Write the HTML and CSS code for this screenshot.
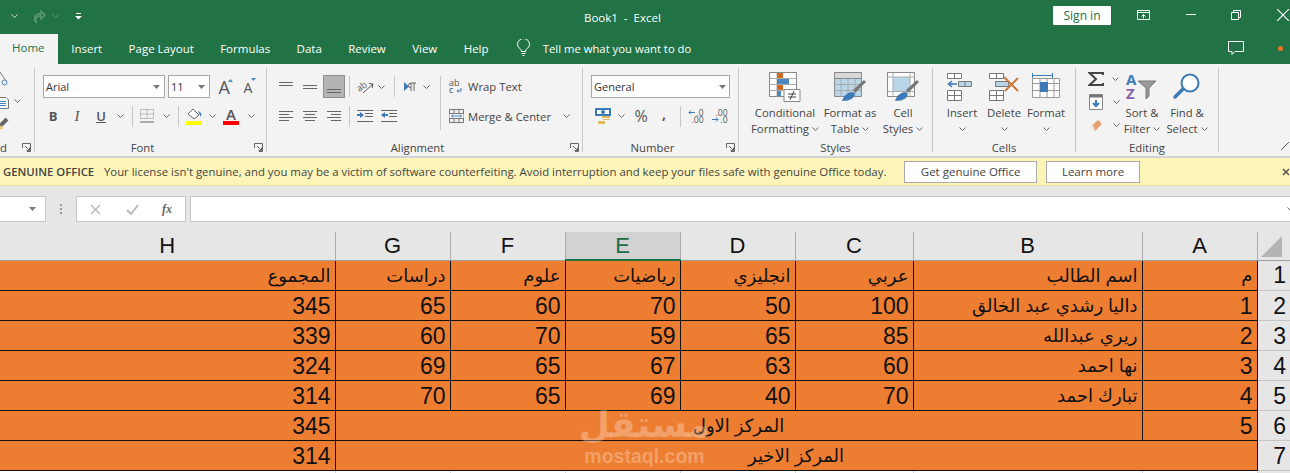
FILE: index.html
```html
<!DOCTYPE html>
<html lang="en">
<head>
<meta charset="utf-8">
<title>Book1 - Excel</title>
<link rel="stylesheet" href="styles.css">
</head>
<body>
<svg class="defs" width="0" height="0" aria-hidden="true">
  <symbol id="chev" viewBox="0 0 7 4"><path d="M.5.5 3.5 3.5 6.5.5" fill="none" stroke="#666" stroke-width="1"/></symbol>
  <symbol id="drop" viewBox="0 0 7 4"><path d="M0 0h7L3.500 4z" fill="#777"/></symbol>
  <symbol id="launch" viewBox="0 0 9 9"><path d="M.5 5V.5H8.500V8.500H5M3 3 7.500 7.500M4.500 7.500H7.500V4.500" fill="none" stroke="#666"/></symbol>
  <symbol id="lines-top" viewBox="0 0 14 10"><path d="M0 .5h14M0 3.500h14" stroke="#666"/></symbol>
  <symbol id="lines-mid" viewBox="0 0 14 10"><path d="M0 3.500h14M0 6.500h14" stroke="#666"/></symbol>
  <symbol id="lines-left" viewBox="0 0 14 11"><path d="M0 .5h14M0 3.500h10M0 6.500h14M0 9.500h10" stroke="#666"/></symbol>
  <symbol id="lines-center" viewBox="0 0 14 11"><path d="M0 .5h14M2 3.500h10M0 6.500h14M2 9.500h10" stroke="#666"/></symbol>
  <symbol id="lines-right" viewBox="0 0 14 11"><path d="M0 .5h14M4 3.500h10M0 6.500h14M4 9.500h10" stroke="#666"/></symbol>
</svg>
<div class="app">
  <header class="titlebar">
    <div class="qat">
      <svg class="qat-undo" viewBox="0 0 16 14"><path d="M-5 7a5 5 0 1 0 10 0 5 5 0 1 0-10 0" fill="none" stroke="#fff" stroke-width="2"/></svg>
      <svg class="ic7x4 qat-c1" viewBox="0 0 7 4"><path d="M.5.5 3.500 3.500 6.500.5" fill="none" stroke="#d6e5dc"/></svg>
      <svg class="qat-redo" viewBox="0 0 16 14"><path d="M14 6 10 2v3H7a5 5 0 0 0-1 9 4 4 0 0 1 2-7h2v3z" fill="none" stroke="#5d9c7b" stroke-width="1.300"/></svg>
      <svg class="ic7x4 qat-c2" viewBox="0 0 7 4"><path d="M.5.5 3.500 3.500 6.500.5" fill="none" stroke="#5d9c7b"/></svg>
      <svg class="qat-more" viewBox="0 0 7 7"><path d="M1 .5h5" stroke="#fff"/><path d="M0 3h7L3.500 6.500z" fill="#fff"/></svg>
    </div>
    <div class="doc-title">Book1 &nbsp;-&nbsp; Excel</div>
    <div class="win">
      <button class="signin">Sign in</button>
      <svg class="win-ribbon" viewBox="0 0 13 10"><path d="M.5.5h12v9H.5zM.5 2.500h12M6.500 8.500V4.500M4.500 6.500l2-2 2 2" fill="none" stroke="#fff"/></svg>
      <svg class="win-min" viewBox="0 0 10 1"><path d="M0 .5h10" stroke="#fff"/></svg>
      <svg class="win-max" viewBox="0 0 10 10"><path d="M.5 2.500h7v7h-7zM2.500 2.500v-2h7v7h-2" fill="none" stroke="#fff"/></svg>
      <svg class="win-close" viewBox="0 0 10 10"><path d="M0 0 10 10M10 0 0 10" stroke="#fff"/></svg>
    </div>
  </header>

  <nav class="tabs">
    <span class="tab tab-home">Home</span>
    <span class="tab">Insert</span>
    <span class="tab">Page Layout</span>
    <span class="tab">Formulas</span>
    <span class="tab">Data</span>
    <span class="tab">Review</span>
    <span class="tab">View</span>
    <span class="tab">Help</span>
    <svg class="bulb" viewBox="0 0 13 17"><path d="M4.500 12.500C4.500 9.500.5 9 .5 5.500a6 6 0 0 1 12 0c0 3.500-4 4-4 7zM4.500 14.500h4M5.500 16.500h2" fill="none" stroke="#fff"/></svg>
    <span class="tell">Tell me what you want to do</span>
    <svg class="comment" viewBox="0 0 16 14"><path d="M.5.5h15v10H7l-3 3v-3H.5z" fill="none" stroke="#fff"/></svg>
    <span class="dot"></span>
  </nav>

  <section class="ribbon">
    <div class="group g-clip">
      <div class="clip-icons">
        <svg class="clip-cut" viewBox="0 0 9 14"><path d="M0 0 6 9" stroke="#777" fill="none"/><circle cx="4.500" cy="10.500" r="2.500" fill="none" stroke="#4a86c0"/></svg>
        <svg class="clip-copy" viewBox="0 0 9 12"><path d="M-3 .5H6L8.500 3V11.500H-3z" fill="#fff" stroke="#777"/><path d="M-2 4.500H6M-2 6.500H6M-2 8.500H6" stroke="#4a86c0"/></svg>
        <svg class="clip-paint" viewBox="0 0 9 13"><path d="M0 9 7 2" stroke="#666" stroke-width="4"/><path d="M0 9 2 12" stroke="#e6c86a" stroke-width="3"/></svg>
      </div>
      <div class="chev-col">
        <svg class="chev clip-chev"><use href="#chev"/></svg>
      </div>
      <div class="g-label g-label-clip"><span>d</span><svg class="launch"><use href="#launch"/></svg></div>
    </div>

    <div class="group g-font">
      <div class="row font-r1">
        <div class="select sel-font"><span>Arial</span><svg class="drop"><use href="#drop"/></svg></div>
        <div class="select sel-size"><span>11</span><svg class="drop"><use href="#drop"/></svg></div>
        <div class="grow-a">A<svg class="tri" viewBox="0 0 5 3"><path d="M0 3 2.500 0 5 3z" fill="#4a86c0"/></svg></div>
        <div class="shrink-a">A<svg class="tri" viewBox="0 0 5 3"><path d="M0 0 2.500 3 5 0z" fill="#4a86c0"/></svg></div>
      </div>
      <div class="row font-r2">
        <b class="fmt">B</b>
        <i class="fmt fmt-i">I</i>
        <u class="fmt fmt-u">U</u>
        <svg class="chev"><use href="#chev"/></svg>
        <span class="vsep"></span>
        <svg class="ic-border" viewBox="0 0 14 14"><path d="M.5.500h13v9H.5zM7 .5v9M.5 5h13" fill="none" stroke="#888" stroke-dasharray="1 1"/><path d="M0 13h14" stroke="#666" stroke-width="1"/></svg>
        <svg class="chev"><use href="#chev"/></svg>
        <span class="vsep"></span>
        <svg class="ic-fill" viewBox="0 0 16 17"><path d="M7 1 13 7 8 11 2 6z" fill="#fff" stroke="#666"/><path d="M12 3c3 1 4 3 3 6z" fill="#3d7ab8"/><path d="M0 13h16v4H0z" fill="#ff0"/></svg>
        <svg class="chev"><use href="#chev"/></svg>
        <div class="fontcolor"><span>A</span><i class="fc-bar"></i></div>
        <svg class="chev"><use href="#chev"/></svg>
      </div>
      <div class="g-label lb-font"><span>Font</span><svg class="launch"><use href="#launch"/></svg></div>
    </div>

    <div class="group g-align">
      <div class="row align-r1">
        <svg class="ln"><use href="#lines-top"/></svg>
        <svg class="ln"><use href="#lines-mid"/></svg>
        <div class="bottom-on"><svg class="ln-on" viewBox="0 0 14 6"><path d="M0 .5h14M0 3.500h14" stroke="#666"/></svg></div>
        <span class="vsep"></span>
        <svg class="ic-orient" viewBox="0 0 17 15"><text x="0" y="10" transform="rotate(-35 6 8)" class="orient-t">ab</text><path d="M6 14 16 5M12 4.500l4 .5-1 4" fill="none" stroke="#555"/></svg>
        <svg class="chev"><use href="#chev"/></svg>
        <span class="vsep"></span>
        <svg class="ic-rtl" viewBox="0 0 13 10"><path d="M0 0 5 4.500 0 9z" fill="#3d7ab8"/><path d="M7 9V1h5M10 1v8M7 1a2.500 2.500 0 0 0 0 5" fill="none" stroke="#666"/></svg>
        <svg class="chev"><use href="#chev"/></svg>
        <span class="vsep vsep-tall"></span>
        <svg class="ic-wrap" viewBox="0 0 14 15"><text x="0" y="7" class="wrap-t">ab</text><text x="0" y="14" class="wrap-t">c</text><path d="M12 9v3H8M9.500 10.500 8 12l1.500 1.500" fill="none" stroke="#3d7ab8"/></svg>
        <span class="rb-text">Wrap Text</span>
      </div>
      <div class="row align-r2">
        <svg class="ln2"><use href="#lines-left"/></svg>
        <svg class="ln2"><use href="#lines-center"/></svg>
        <svg class="ln2"><use href="#lines-right"/></svg>
        <span class="vsep"></span>
        <svg class="ic-indent" viewBox="0 0 16 12"><path d="M0 .5h16M8 3.500h8M8 6.500h8M0 11.500h16" stroke="#666"/><path d="M0 5h4" stroke="#3d7ab8" stroke-width="2"/><path d="M3 2 7 5 3 8z" fill="#3d7ab8"/></svg>
        <svg class="ic-indent" viewBox="0 0 16 12"><path d="M0 .5h16M8 3.500h8M8 6.500h8M0 11.500h16" stroke="#666"/><path d="M3 5h4" stroke="#3d7ab8" stroke-width="2"/><path d="M4 2 0 5 4 8z" fill="#3d7ab8"/></svg>
        <span></span>
        <svg class="ic-merge" viewBox="0 0 15 14"><path d="M.5.5h14v13H.5zM.5 4.500h14M.5 9.500h14M5 .5v4M10 .5v4M5 9.500v4M10 9.500v4" fill="#f3f3f3" stroke="#777"/><path d="M.5 5h14v4H.5z" fill="#fff"/><path d="M2.500 7h10M4 5.500 2.500 7 4 8.500M11 5.500 12.500 7 11 8.500" fill="none" stroke="#3d7ab8"/></svg>
        <span class="rb-text">Merge &amp; Center</span>
        <svg class="chev"><use href="#chev"/></svg>
      </div>
      <div class="g-label lb-align"><span>Alignment</span><svg class="launch"><use href="#launch"/></svg></div>
    </div>

    <div class="group g-num">
      <div class="row num-r1">
        <div class="select sel-num"><span>General</span><svg class="drop"><use href="#drop"/></svg></div>
      </div>
      <div class="row num-r2">
        <svg class="ic-acct" viewBox="0 0 16 16"><path d="M0 0h16v8H0z" fill="#3d7ab8"/><path d="M2 2h12v4H2z" fill="#fff"/><circle cx="8" cy="4" r="2" fill="#3d7ab8"/><path d="M7 8h8v2H7zM8 11h7v1H8zM3 13h7v3H3z" fill="#e3bb5f"/></svg>
        <svg class="chev"><use href="#chev"/></svg>
        <span class="pct">%</span>
        <span class="comma">,</span>
        <span class="vsep"></span>
        <div class="dec"><span>.0</span><span>.00</span><svg class="dec-arr" viewBox="0 0 7 5"><path d="M7 2.500H1M3 .5 1 2.500 3 4.500" fill="none" stroke="#3d7ab8"/></svg></div>
        <div class="dec dec-b"><span>.00</span><span>.0</span><svg class="dec-arr" viewBox="0 0 7 5"><path d="M0 2.500h6M4 .5l2 2-2 2" fill="none" stroke="#3d7ab8"/></svg></div>
      </div>
      <div class="g-label lb-num"><span>Number</span><svg class="launch"><use href="#launch"/></svg></div>
    </div>

    <div class="group g-styles">
      <div class="bigrow styles-row">
        <div class="big">
          <svg class="big-ic" viewBox="0 0 32 30"><path d="M.5.5h27v24H.5z" fill="#fff" stroke="#888"/><path d="M8 .5v24M.5 6.500h27M.5 12.500h27M.5 18.500h27" stroke="#aaa"/><path d="M8 1h6v5H8zM8 13h6v5H8z" fill="#d2691e"/><path d="M8 7h12v5H8zM8 19h4v5H8z" fill="#4a86c0"/><path d="M15 17.500h16v12H15z" fill="#fff" stroke="#888"/><path d="M19 22h8M19 25h8M21 28l4-9" stroke="#444" fill="none"/></svg>
          <span class="big-l">Conditional</span>
          <span class="big-l">Formatting <svg class="chev"><use href="#chev"/></svg></span>
        </div>
        <div class="big">
          <svg class="big-ic" viewBox="0 0 32 30"><path d="M.5.5h27v24H.5z" fill="#b9d6e8" stroke="#888"/><path d="M.5 6.500h27M.5 12.500h27M.5 18.500h27M7 .5v24M14 .5v24M21 .5v24" stroke="#aaa"/><path d="M.5.5h27v6H.5z" fill="#d8d8d8" stroke="#888"/><path d="M19 18 30 8l2 2-11 11z" fill="#777"/><path d="M8 29c2-6 6-9 11-9l2 2c-1 4-4 7-13 7z" fill="#3d7ab8"/></svg>
          <span class="big-l">Format as</span>
          <span class="big-l">Table <svg class="chev"><use href="#chev"/></svg></span>
        </div>
        <div class="big">
          <svg class="big-ic" viewBox="0 0 32 30"><path d="M.5.5h27v24H.5z" fill="#fff" stroke="#888"/><path d="M6 5h17v14H6z" fill="#b9d6e8"/><path d="M.5 5h27M.5 19.500h27M6 .5v24M23 .5v24" stroke="#aaa"/><path d="M19 18 30 8l2 2-11 11z" fill="#777"/><path d="M8 29c2-6 6-9 11-9l2 2c-1 4-4 7-13 7z" fill="#3d7ab8"/></svg>
          <span class="big-l">Cell</span>
          <span class="big-l">Styles <svg class="chev"><use href="#chev"/></svg></span>
        </div>
      </div>
      <div class="g-label g-center"><span>Styles</span></div>
    </div>

    <div class="group g-cells">
      <div class="bigrow cells-row">
        <div class="big">
          <svg class="big-ic" viewBox="0 0 32 30"><path d="M1.500 1.500h14v5h-14zM8.500 1.500v5M1.500 18.500h14v10h-14zM1.500 23.500h14M8.500 18.500v10" fill="#fff" stroke="#777"/><path d="M12.500 9.500h13v5h-13zM19 9.500v5" fill="#b9d6e8" stroke="#777"/><path d="M11 12H3M6 9 2.500 12 6 15" fill="none" stroke="#3d7ab8" stroke-width="1.500"/></svg>
          <span class="big-l">Insert</span>
          <svg class="chev big-chev"><use href="#chev"/></svg>
        </div>
        <div class="big">
          <svg class="big-ic" viewBox="0 0 32 30"><path d="M1.500 1.500h14v5h-14zM8.500 1.500v5M1.500 18.500h14v10h-14zM1.500 23.500h14M8.500 18.500v10" fill="#fff" stroke="#777"/><path d="M7.500 9.500h13v5h-13z" fill="#b9d6e8" stroke="#777"/><path d="M16 5 30 19M30 6 17 19" stroke="#cc7a3b" stroke-width="2" fill="none"/></svg>
          <span class="big-l">Delete</span>
          <svg class="chev big-chev"><use href="#chev"/></svg>
        </div>
        <div class="big">
          <svg class="big-ic" viewBox="0 0 32 30"><path d="M2.500 1v5M22.500 1v5M3 3.500h19" stroke="#3d7ab8" fill="none"/><path d="M2.500 6.500h27v19h-27zM2.500 11.500h27M2.500 18.500h27M10 6.500v19M17 6.500v19M24 6.500v19" fill="#fff" stroke="#999"/><path d="M10 10h8v10h-8z" fill="#3d7ab8"/></svg>
          <span class="big-l">Format</span>
          <svg class="chev big-chev"><use href="#chev"/></svg>
        </div>
      </div>
      <div class="g-label g-center"><span>Cells</span></div>
    </div>

    <div class="group g-edit">
      <div class="bigrow edit-row">
        <div class="edit-col">
          <div class="edit-item"><svg class="ic-sigma" viewBox="0 0 16 14"><path d="M15 3V1H1.500L8 7 1.500 13H15v-2" fill="none" stroke="#444" stroke-width="2"/></svg><svg class="chev"><use href="#chev"/></svg></div>
          <div class="edit-item"><svg class="ic-fd" viewBox="0 0 14 16"><path d="M.5 .5h13v15H.5z" fill="#fff" stroke="#888"/><path d="M.5.5h13v3H.5z" fill="#777"/><path d="M7 6v6M4 9l3 3 3-3" fill="none" stroke="#3d7ab8" stroke-width="2"/></svg><svg class="chev"><use href="#chev"/></svg></div>
          <div class="edit-item"><svg class="ic-eraser" viewBox="0 0 14 13"><path d="M1 8 9 1l4 4-7 7H4z" fill="#e6a070"/><path d="M1 8 3 12H6L4 6z" fill="#eee"/></svg><svg class="chev"><use href="#chev"/></svg></div>
        </div>
        <div class="big big-sort">
          <svg class="big-ic" viewBox="0 0 32 30"><text x="0" y="13" class="az-a">A</text><text x="0" y="27" class="az-z">Z</text><path d="M12 9h18l-7 7v8l-3 3v-11z" fill="#999" stroke="#777"/></svg>
          <span class="big-l">Sort &amp;</span>
          <span class="big-l">Filter <svg class="chev"><use href="#chev"/></svg></span>
        </div>
        <div class="big big-find">
          <svg class="big-ic" viewBox="0 0 32 30"><circle cx="19" cy="11" r="8.500" fill="#fff" stroke="#3d7ab8" stroke-width="2"/><path d="M12 17 4 25" stroke="#3d7ab8" stroke-width="3.500" stroke-linecap="round"/></svg>
          <span class="big-l">Find &amp;</span>
          <span class="big-l">Select <svg class="chev"><use href="#chev"/></svg></span>
        </div>
      </div>
      <div class="g-label g-center"><span>Editing</span></div>
    </div>

    <div class="collapse"><svg class="ic-collapse" viewBox="0 0 8 8"><path d="M0 8 8 0" stroke="#555"/></svg></div>
  </section>

  <section class="notice">
    <span class="notice-h">GENUINE OFFICE</span>
    <span class="notice-t">Your license isn't genuine, and you may be a victim of software counterfeiting. Avoid interruption and keep your files safe with genuine Office today.</span>
    <button class="notice-b nb-1">Get genuine Office</button>
    <button class="notice-b nb-2">Learn more</button>
    <svg class="notice-x" viewBox="0 0 8 8"><path d="M1 1 7 7M7 1 1 7" stroke="#555" stroke-width="1.500"/></svg>
  </section>

  <section class="fbar">
    <div class="namebox"><svg class="drop"><use href="#drop"/></svg></div>
    <span class="fdots"></span>
    <div class="fbtns">
      <svg class="fb-x" viewBox="0 0 11 11"><path d="M1 1 10 10M10 1 1 10" stroke="#bbb" stroke-width="1.500"/></svg>
      <svg class="fb-c" viewBox="0 0 13 11"><path d="M1 6 5 10 12 1" fill="none" stroke="#bbb" stroke-width="2"/></svg>
      <span class="fb-fx">fx</span>
    </div>
    <div class="finput"><svg class="chev finput-chev"><use href="#chev"/></svg></div>
  </section>

  <section class="sheet">
    <table class="grid">
      <colgroup>
        <col class="c-h"><col class="c-n"><col class="c-n"><col class="c-n"><col class="c-n"><col class="c-c"><col class="c-b"><col class="c-n"><col class="c-r">
      </colgroup>
      <thead>
        <tr>
          <th>H</th><th>G</th><th>F</th><th class="sel">E</th><th>D</th><th>C</th><th>B</th><th>A</th>
          <th class="corner"><span class="tri-all"></span></th>
        </tr>
      </thead>
      <tbody>
        <tr><td class="ar">المجموع</td><td class="ar">دراسات</td><td class="ar">علوم</td><td class="ar">رياضيات</td><td class="ar">انجليزي</td><td class="ar">عربي</td><td class="ar">اسم الطالب</td><td class="ar">م</td><th>1</th></tr>
        <tr><td>345</td><td>65</td><td>60</td><td>70</td><td>50</td><td>100</td><td class="ar">داليا رشدي عبد الخالق</td><td>1</td><th>2</th></tr>
        <tr><td>339</td><td>60</td><td>70</td><td>59</td><td>65</td><td>85</td><td class="ar">ريري عبدالله</td><td>2</td><th>3</th></tr>
        <tr><td>324</td><td>69</td><td>65</td><td>67</td><td>63</td><td>60</td><td class="ar">نها احمد</td><td>3</td><th>4</th></tr>
        <tr><td>314</td><td>70</td><td>65</td><td>69</td><td>40</td><td>70</td><td class="ar">تبارك احمد</td><td>4</td><th>5</th></tr>
        <tr><td>345</td><td colspan="6" class="ar mid">المركز الاول</td><td>5</td><th>6</th></tr>
        <tr><td>314</td><td colspan="7" class="ar mid">المركز الاخير</td><th>7</th></tr>
        <tr class="empty"><td></td><td></td><td></td><td></td><td></td><td></td><td></td><td></td><th></th></tr>
      </tbody>
    </table>
    <div class="mark"><span class="mark-ar">مستقل</span><span class="mark-en">mostaql.com</span></div>
  </section>
</div>
</body>
</html>
```

FILE: styles.css
```css
* { box-sizing: border-box; }
html, body { margin: 0; padding: 0; }
body { width: 1290px; height: 473px; overflow: hidden; font-family: "Open Sans", "Noto Sans", sans-serif; font-size: 11.3px; color: #444; }
.defs { position: absolute; }
svg { display: block; flex: none; }
.app { display: flex; flex-direction: column; width: 1290px; height: 473px; overflow: hidden; }

/* title bar */
.titlebar { display: flex; align-items: center; height: 32px; background: #217346; color: #fff; flex: none; }
.qat { display: flex; align-items: center; width: 584px; }
.qat-undo { width: 16px; height: 14px; margin-left: -9px; }
.ic7x4 { width: 7px; height: 4px; }
.qat-c1 { margin-left: 4px; }
.qat-redo { width: 16px; height: 14px; margin-left: 13px; }
.qat-c2 { margin-left: 5px; }
.qat-more { width: 7px; height: 7px; margin-left: 16px; }
.doc-title { width: 76px; white-space: nowrap; color: #fff; font-size: 11.500px; margin-top: 3px; }
.win { display: flex; align-items: center; margin-left: 393px; }
.signin { width: 58px; height: 19px; margin-top: -1px; background: #fff; color: #217346; border: 0; border-radius: 1px; padding: 0; font: 12px "Open Sans", sans-serif; }
.win-ribbon { width: 13px; height: 10px; margin-left: 26px; margin-top: -2px; }
.win-min { width: 10px; height: 1px; margin-left: 36px; margin-top: -4px; }
.win-max { width: 10px; height: 10px; margin-left: 35px; margin-top: -2px; }
.win-close { width: 12px; height: 12px; margin-left: 36px; margin-top: -2px; }

/* tabs */
.tabs { display: flex; align-items: center; height: 32px; background: #217346; flex: none; position: relative; }
.tab { color: #fff; padding: 0 13.200px; white-space: nowrap; font-size: 11.500px; }
.tab-home { background: #f3f3f3; color: #217346; align-self: flex-end; height: 30px; width: 58px; padding: 6px 0 0 12px; }
.bulb { width: 13px; height: 17px; margin-left: 15px; margin-top: -1px; }
.tell { color: #fff; margin-left: 13px; white-space: nowrap; width: 151px; }
.comment { width: 16px; height: 14px; margin-left: 534px; }
.dot { width: 5px; height: 5px; border-radius: 50%; background: #e8762c; margin-left: 34px; }

/* ribbon */
.ribbon { display: flex; height: 94px; flex: none; background: #f3f3f3; border-bottom: 2px solid #d2d2d2; padding-top: 4px; position: relative; }
.group { display: flex; flex-direction: column; height: 84px; border-right: 1px solid #c6c6c6; position: relative; flex: none; }
.g-clip { width: 35px; flex-direction: row; flex-wrap: wrap; }
.g-font { width: 232px; }
.g-align { width: 316px; }
.g-num { width: 156px; }
.g-styles { width: 194px; }
.g-cells { width: 143px; }
.g-edit { width: 143px; }
.g-label { display: flex; align-items: center; justify-content: center; position: absolute; left: 0; right: 0; bottom: -3px; height: 16px; color: #444; }
.g-label .launch { position: absolute; right: 3px; top: 4px; }
.lb-font { padding-right: 16px; }
.lb-align { padding-right: 14px; }
.lb-num { padding-right: 16px; }
.launch { width: 9px; height: 9px; }
.g-label-clip { justify-content: flex-start; }
.chev { width: 7px; height: 4px; display: inline-block; }
.drop { width: 7px; height: 4px; }
.row { display: grid; align-items: center; justify-items: center; }
.vsep { width: 1px; height: 21px; background: #c6c6c6; }
.vsep-tall { height: 54px; align-self: start; margin-top: 1px; }

/* clipboard */
.clip-icons { display: flex; flex-direction: column; width: 14px; padding-top: 4px; }
.clip-cut { width: 9px; height: 14px; }
.clip-copy { width: 9px; height: 12px; margin-top: 11px; }
.clip-paint { width: 9px; height: 13px; margin-top: 8px; }
.chev-col { width: 8px; margin-left: 0; padding-top: 31px; }
.clip-chev { display: block; }

/* font */
.font-r1 { grid-template-columns: 122px 42px 24px 18px; column-gap: 3px; margin: 7px 0 0 8px; justify-content: start; height: 23px; }
.select { display: flex; align-items: center; justify-content: space-between; background: #fff; border: 1px solid #a6a6a6; height: 23px; padding: 0 4px 0 2px; width: 100%; color: #333; font-size: 11px; }
.grow-a, .shrink-a { position: relative; color: #555; font: 18px "Open Sans", sans-serif; width: 13px; line-height: 20px; }
.shrink-a { font-size: 14px; width: 11px; margin-top: 2px; }
.tri { position: absolute; width: 5px; height: 3px; top: 2px; left: 9px; }
.shrink-a .tri { left: 7px; top: 0; }
.font-r2 { grid-template-columns: 24px 24px 24px 14px 10px 20px 18px 6px 26px 10px 28px 12px; margin: 7px 0 0 6px; justify-content: start; height: 22px; }
.fmt { font: 13px "Open Sans", sans-serif; color: #555; }
b.fmt { font-weight: 700; }
.fmt-i { font-family: "Liberation Serif", serif; font-style: italic; font-size: 15px; }
.fmt-u { font-weight: 600; }
.ic-border { width: 14px; height: 14px; }
.ic-fill { width: 16px; height: 17px; }
.fontcolor { display: flex; flex-direction: column; align-items: center; width: 16px; color: #555; font: 600 15px/15px "Open Sans", sans-serif; }
.fc-bar { display: block; width: 16px; height: 4px; background: #f00; margin-top: -1px; }

/* alignment */
.ln { width: 14px; height: 10px; }
.ln2 { width: 14px; height: 11px; }
.align-r1 { grid-template-columns: 24px 24px 24px 6px 26px 6px 20px 12px 20px 8px 24px 60px; grid-template-rows: 23px; padding-left: 7px; justify-content: start; margin-top: 7px; height: 23px; }
.align-r1 > .rb-text { justify-self: start; }
.bottom-on { width: 22px; height: 23px; background: #b4b4b4; border: 1px solid #8f8f8f; display: flex; align-items: flex-end; justify-content: center; padding-bottom: 2px; }
.ln-on { width: 14px; height: 6px; }
.ic-orient { width: 17px; height: 15px; }
.orient-t { font: 9px "Open Sans", sans-serif; fill: #555; }
.ic-rtl { width: 13px; height: 10px; }
.ic-wrap { width: 14px; height: 15px; }
.wrap-t { font: 9px "Open Sans", sans-serif; fill: #555; }
.rb-text { white-space: nowrap; color: #444; }
.align-r2 { grid-template-columns: 24px 24px 24px 6px 26px 22px 44px 24px 85px 26px; padding-left: 7px; justify-content: start; margin-top: 7px; height: 22px; }
.align-r2 > .rb-text { justify-self: start; }
.ic-indent { width: 16px; height: 12px; }
.ic-merge { width: 15px; height: 14px; }

/* number */
.num-r1 { grid-template-columns: 139px; margin: 7px 0 0 8px; height: 23px; justify-items: stretch; justify-content: start; }
.sel-num { padding-right: 3px; }
.num-r2 { grid-template-columns: 24px 12px 28px 18px 14px 17px 31px; margin: 7px 0 0 8px; height: 22px; justify-content: start; }
.ic-acct { width: 16px; height: 16px; }
.pct { font-size: 16px; color: #555; }
.comma { font: 700 14px "Open Sans", sans-serif; color: #555; margin-top: -6px; }
.dec { position: relative; display: flex; flex-direction: column; align-items: flex-end; width: 16px; font: 8.500px/7px "Open Sans", sans-serif; color: #555; }
.dec-arr { position: absolute; width: 7px; height: 5px; left: 0; top: 1px; }
.dec-b .dec-arr { top: 8px; }

/* big buttons */
.bigrow { display: flex; justify-content: flex-start; height: 64px; }
.big { display: flex; flex-direction: column; align-items: center; line-height: 16px; white-space: nowrap; position: relative; }
.big-ic { width: 32px; height: 30px; margin: 4px 0 3px; }
.big-l { display: inline-flex; align-items: center; gap: 3px; height: 16px; color: #444; }
.big-chev { margin-top: 6px; }
.styles-row { padding-left: 9px; }
.styles-row .big:nth-child(1) { width: 74px; }
.styles-row .big:nth-child(2) { width: 56px; }
.styles-row .big:nth-child(3) { width: 50px; }
.cells-row { padding-left: 8px; }
.cells-row .big { width: 42px; }
.edit-row { padding-left: 8px; }
.edit-col { display: flex; flex-direction: column; gap: 8px; width: 42px; padding-top: 4px; flex: none; }
.edit-item { display: flex; align-items: center; gap: 6px; height: 16px; padding-left: 4px; }
.edit-item .chev { margin-left: 2px; }
.ic-sigma { width: 16px; height: 14px; }
.ic-fd { width: 14px; height: 16px; margin: 0 2px 0 1px; }
.ic-eraser { width: 14px; height: 13px; margin: 0 2px 0 1px; }
.big-sort { width: 32px; flex: none; }
.big-find { width: 58px; flex: none; }
.az-a { font: 700 15px "Open Sans", sans-serif; fill: #3d7ab8; }
.az-z { font: 700 15px "Open Sans", sans-serif; fill: #8d5fb0; }
.collapse { flex: 1; position: relative; }
.ic-collapse { position: absolute; right: 1px; bottom: 6px; width: 8px; height: 8px; }

/* notice */
.notice { display: flex; align-items: center; height: 28px; flex: none; background: #fdf5b8; border-bottom: 1px solid #e6dc9c; padding-left: 3px; color: #444; position: relative; white-space: nowrap; }
.notice-h { width: 101px; font-weight: 600; color: #444; font-size: 11.300px; }
.notice-t { width: 801px; font-size: 11.400px; }
.notice-b { height: 22px; background: #fff; border: 1px solid #aaa; color: #444; font: 11.500px "Open Sans", sans-serif; padding: 0; }
.nb-1 { width: 133px; }
.nb-2 { width: 94px; margin-left: 9px; }
.notice-x { width: 8px; height: 8px; margin-left: 142px; }

/* formula bar */
.fbar { display: flex; align-items: center; height: 46px; flex: none; background: #e6e6e6; }
.namebox { display: flex; align-items: center; justify-content: flex-end; width: 46px; height: 26px; background: #fff; border: 1px solid #c6c6c6; border-left: 0; padding-right: 9px; }
.fdots { width: 2px; height: 10px; margin-left: 14px; background: repeating-linear-gradient(#999 0 2px, transparent 2px 4px); }
.fbtns { display: flex; align-items: center; width: 110px; height: 26px; margin-left: 14px; background: #fff; border: 1px solid #c6c6c6; }
.fb-x { width: 11px; height: 11px; margin-left: 13px; }
.fb-c { width: 13px; height: 11px; margin-left: 25px; }
.fb-fx { font: italic 700 12px "Liberation Serif", serif; color: #666; margin-left: 23px; }
.finput { flex: 1; display: flex; align-items: center; justify-content: flex-end; height: 26px; margin-left: 4px; background: #fff; border: 1px solid #c6c6c6; border-right: 0; overflow: hidden; }
.finput-chev { margin-right: -4px; }

/* sheet */
.sheet { position: relative; flex: 1; background: #fff; overflow: hidden; }
.grid { border-collapse: collapse; table-layout: fixed; width: 1290px; font-family: "Liberation Sans", Arial, sans-serif; font-size: 23px; color: #111; }
.c-h { width: 335px; }
.c-n { width: 115px; }
.c-c { width: 118px; }
.c-b { width: 229px; }
.c-r { width: 33px; }
.grid thead th { height: 28px; background: #e6e6e6; font-weight: 400; font-size: 22px; line-height: 26px; text-align: center; padding: 0; border-right: 1px solid #adadad; border-left: 0; border-bottom: 1px solid #9e9e9e; color: #111; }
.grid thead th.sel { background: #d2d2d2; color: #1e6b41; border-bottom: 2px solid #217346; }
.grid thead th.corner { position: relative; border-right: 0; }
.tri-all { position: absolute; right: 8px; bottom: 3px; width: 0; height: 0; border-style: solid; border-width: 0 0 21px 21px; border-color: transparent transparent #b4b4b4 transparent; }
.grid td { height: 30px; padding: 1px 4px 0 0; background: #ed7d31; border: 1px solid #111; text-align: right; line-height: 28px; white-space: nowrap; overflow: hidden; }
.grid tbody tr:first-child td { border-top: 0; }
.grid tbody td:first-child { border-left: 0; }
.grid tbody th { background: #e6e6e6; font-weight: 400; font-size: 23px; line-height: 28px; padding: 0 4px 0 0; text-align: right; border-bottom: 1px solid #c6c6c6; color: #111; }
.grid td.ar { font-family: "Liberation Sans", "DejaVu Sans", sans-serif; font-size: 18px; }
.grid td.mid { text-align: center; padding: 0; }
.grid .empty td { background: #fff; border: 1px solid #d4d4d4; border-top: 1px solid #111; }
.mark { position: absolute; left: 583px; top: 175px; width: 123px; display: flex; flex-direction: column; align-items: center; color: rgba(255,255,255,.28); pointer-events: none; }
.mark-ar { font: 700 36px/36px "DejaVu Sans", sans-serif; margin-bottom: 4px; }
.mark-en { font: 700 19.500px/18px "Liberation Sans", sans-serif; white-space: nowrap; }
```
